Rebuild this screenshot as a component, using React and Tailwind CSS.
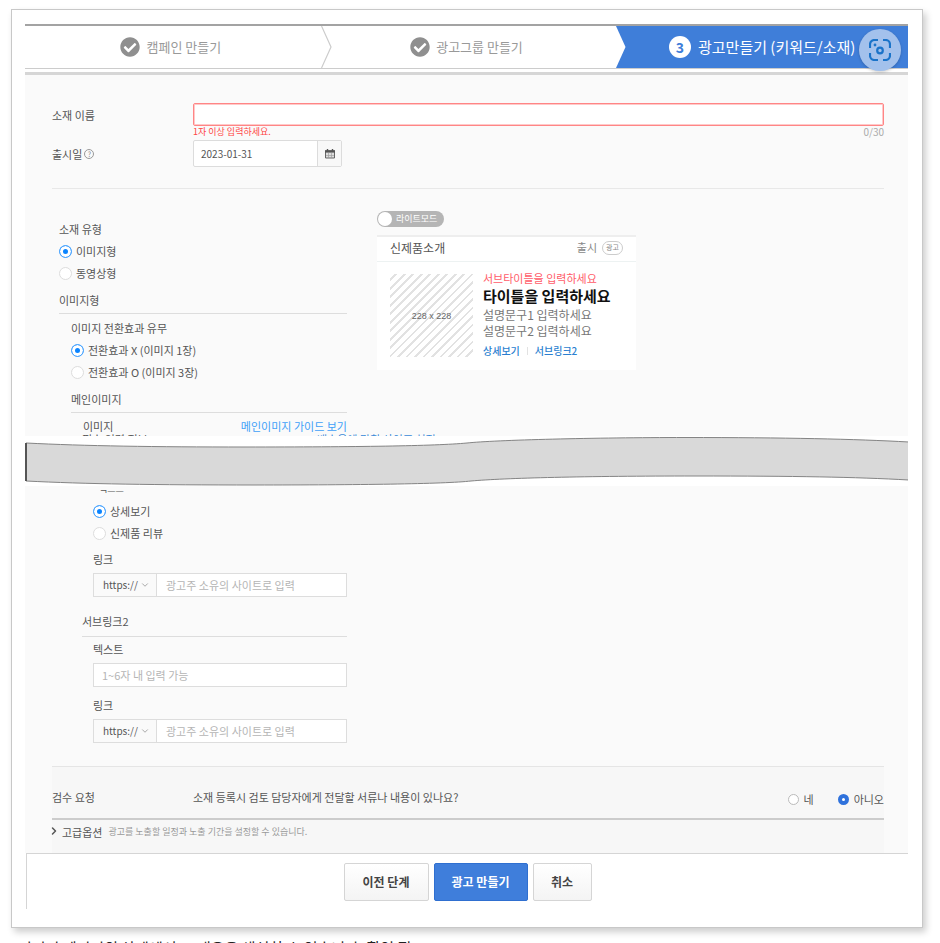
import { useState } from 'react'
import { ChevronDown, ChevronRight } from 'lucide-react'
import { FaCheckCircle } from 'react-icons/fa'

function CalendarIcon() {
  return (
    <svg viewBox="0 0 10 10" className="size-[10px]" aria-hidden="true">
      <path d="M0.5 2h9v7h-9z" fill="#ddd" stroke="#666" strokeWidth="1" />
      <path d="M0 1.2h10v2.4H0z" fill="#555" />
      <path d="M2.5 0v2M7.5 0v2" stroke="#555" strokeWidth="1.4" />
      <path d="M3.5 4v5M6.5 4v5M1 6.5h8" stroke="#999" strokeWidth="0.6" />
    </svg>
  )
}

function LensIcon() {
  return (
    <svg viewBox="0 0 22 22" className="size-[22px]" fill="none" stroke="#1a73c9" strokeWidth="2.2" aria-hidden="true">
      <path d="M1 9V5.5A4.5 4.5 0 0 1 5.5 1H9" />
      <path d="M14 1h2.5A4.5 4.5 0 0 1 21 5.5V9" />
      <path d="M1 14v2.5A4.5 4.5 0 0 0 5.5 21H9" />
      <path d="M14 21h2.5a4.5 4.5 0 0 0 4.5-4.5V14" />
      <circle cx="11" cy="11.5" r="2.8" />
      <circle cx="6" cy="6" r="1.4" fill="#1a73c9" stroke="none" />
    </svg>
  )
}

function DoneStep({ title, arrow }) {
  return (
    <li className="relative flex flex-1 items-center justify-center gap-1.5 bg-white pr-1 text-[13px] text-[#999]">
      {arrow && (
        <svg viewBox="0 0 11 42" className="absolute left-0 top-0 h-full w-[11px]" fill="none" aria-hidden="true">
          <path d="M0.5 0L10 21L0.5 42" stroke="#ccc" strokeWidth="1.2" />
        </svg>
      )}
      <FaCheckCircle className="size-5 text-[#8f8f8f]" />
      <span>{title}</span>
    </li>
  )
}

function Stepper() {
  return (
    <div className="relative border-t-2 border-[#a3a3a3]">
      <ol className="flex h-[42px] leading-[14px]">
        <DoneStep title="캠페인 만들기" />
        <DoneStep title="광고그룹 만들기" arrow />
        <li className="relative flex flex-1 items-center justify-center gap-[7px] bg-[#3f7ed9] text-[15px] text-white">
          <svg viewBox="0 0 10 42" className="absolute left-0 top-0 h-full w-[10px]" aria-hidden="true">
            <path d="M0 0L9.5 21L0 42z" fill="#fff" />
          </svg>
          <span className="flex size-[22px] items-center justify-center rounded-full bg-white text-sm font-bold text-[#3f7ed9]">3</span>
          <span>광고만들기 (키워드/소재)</span>
        </li>
      </ol>
      <button type="button" aria-label="이미지 검색" className="absolute right-[7px] top-[3px] flex size-[42px] items-center justify-center rounded-full bg-[#a3c1ec] shadow-[0_1px_3px_rgba(0,0,0,0.2)]">
        <LensIcon />
      </button>
      <div className="h-[7px] border-b-[3px] border-t border-b-[#d6d6d6] border-t-[#ccc] bg-white" />
    </div>
  )
}

function Radio({ name, label, defaultChecked }) {
  return (
    <label className="flex h-[22px] items-center gap-1">
      <input
        type="radio"
        name={name}
        defaultChecked={defaultChecked}
        className="size-[13px] appearance-none rounded-full border border-[#ddd] bg-white checked:border-[#4aa5ff] checked:bg-[#0a84ff] checked:shadow-[inset_0_0_0_3px_#fff]"
      />
      <span>{label}</span>
    </label>
  )
}

function LinkField({ id }) {
  return (
    <>
      <label htmlFor={id} className="flex h-[22px] items-center">링크</label>
      <div className="mt-[3px] flex h-6 border border-[#ddd] bg-white">
        <div className="relative w-[63px] border-r border-[#ddd] bg-[#fafafa]">
          <select aria-label="프로토콜" className="h-full w-full appearance-none pl-[9px] text-[10px]">
            <option>https://</option>
          </select>
          <ChevronDown className="pointer-events-none absolute right-[6px] top-[6px] size-[10px] text-[#999]" />
        </div>
        <input id={id} type="text" placeholder="광고주 소유의 사이트로 입력" className="min-w-0 flex-1 px-[9px] outline-none placeholder:text-[#b5b5b5]" />
      </div>
    </>
  )
}

function Preview() {
  return (
    <div className="w-[259px]">
      <button type="button" role="switch" aria-checked="false" className="flex h-4 w-[67px] items-center gap-1 rounded-full bg-[#b5b5b5] px-px text-[9px] text-white">
        <span className="size-[14px] rounded-full bg-white" />
        라이트모드
      </button>
      <div className="mt-2 border-t-2 border-[#eee] bg-white">
        <div className="flex h-[25px] items-center justify-between border-b border-[#edf2f2] px-[13px] pb-[3px] text-xs text-[#555]">
          <span>신제품소개</span>
          <span className="flex items-center gap-[5px] text-[11px] text-[#888]">
            출시
            <span className="flex h-[14px] items-center rounded-full border border-[#ccc] px-[3px] text-[7px]">광고</span>
          </span>
        </div>
        <div className="flex items-center gap-[10px] px-[13px] pb-[11px] pt-[10px]">
          <div className="flex size-[83px] items-center justify-center bg-[repeating-linear-gradient(-45deg,#fff_0px,#fff_4px,#e2e2e2_4px,#e2e2e2_6px)]">
            <span className="font-['Liberation_Sans'] text-[9px] text-[#666]">228 x 228</span>
          </div>
          <div className="flex flex-col">
            <p className="text-[11px] leading-[13px] text-[#ff5c69]">서브타이틀을 입력하세요</p>
            <p className="text-[15px] font-bold leading-[22px] text-[#111]">타이틀을 입력하세요</p>
            <p className="text-xs text-[#777]">설명문구1 입력하세요</p>
            <p className="text-xs text-[#777]">설명문구2 입력하세요</p>
            <div className="mt-1 flex items-center gap-[7px] text-[10px] font-medium leading-4 text-[#2b7fd0]">
              <a href="#detail">상세보기</a>
              <span className="h-2 w-px bg-[#e2e2e2]" />
              <a href="#sub2">서브링크2</a>
            </div>
          </div>
        </div>
      </div>
    </div>
  )
}

// torn-page strip between the two halves of the form
function PageBreak() {
  return (
    <svg viewBox="0 0 883 50" preserveAspectRatio="none" className="block h-[50px] w-full" aria-hidden="true">
      <rect width="883" height="50" fill="#fff" />
      <path
        d="M1 7C60 10 130 11 220 11C330 11 410 10 442 7C470 4 570 1.5 660 1.5C760 1.5 830 3 884 6V44C830 41 770 40 670 40C560 40 480 42 446 45C420 48 330 49 230 49C130 49 60 48 1 45z"
        fill="#d9d9d9"
        stroke="#848484"
      />
      <path d="M1 7V45" stroke="#555" strokeWidth="2" />
    </svg>
  )
}

export default function App() {
  const [name, setName] = useState('')

  return (
    <div className="overflow-hidden bg-white font-['Noto_Sans_CJK_KR',sans-serif] text-[11px] leading-4 text-[#555]">
      <main className="ml-[11px] mr-[17px] mt-[9px] border border-[#c8c8c8] pb-[18px] pl-[13px] pr-[14px] pt-[14px] shadow-[3px_4px_7px_rgba(0,0,0,0.2)]">
        <Stepper />

        <section className="bg-[#fafafa] pt-7">
          <div className="ml-[27px] mr-6 border-b border-[#e8e8e8] pb-[21px]">
            <div className="flex">
              <label htmlFor="name" className="w-[141px] pt-1">소재 이름</label>
              <div className="flex-1">
                <input id="name" value={name} onChange={(e) => setName(e.target.value)} maxLength={30} className="block h-[23px] w-full rounded-xs border border-[#ff8585] bg-white px-2 shadow-[inset_0_0_0_1px_#ffc9c9] outline-none" />
                <div className="flex h-3 justify-between leading-3">
                  <span className="text-[9px] text-[#ff4545]">1자 이상 입력하세요.</span>
                  <span className="text-[10px] text-[#aaa]">{name.length}/30</span>
                </div>
              </div>
            </div>
            <div className="mt-0.5 flex items-center">
              <div className="flex w-[141px] items-center gap-0.5">
                <label htmlFor="date">출시일</label>
                <span className="flex size-[10px] items-center justify-center rounded-full border border-[#999] text-[7px] text-[#888]">?</span>
              </div>
              <div className="flex h-[27px] w-[149px] rounded-xs border border-[#dcdcdc] bg-white">
                <input id="date" defaultValue="2023-01-31" className="min-w-0 flex-1 px-[7px] text-[10px] outline-none" />
                <button type="button" aria-label="날짜 선택" className="flex w-6 items-center justify-center border-l border-[#dcdcdc] bg-[#f8f8f8]">
                  <CalendarIcon />
                </button>
              </div>
            </div>
          </div>

          <div className="flex gap-[30px] pl-[34px]">
            <div className="w-[288px] pt-[29px]">
              <h3 className="flex h-[22px] items-center">소재 유형</h3>
              <Radio name="type" label="이미지형" defaultChecked />
              <Radio name="type" label="동영상형" />
              <h3 className="mt-[5px] h-[25px] border-b border-[#ddd] pt-[3px]">이미지형</h3>
              <div className="pl-3 pt-[3px]">
                <h4 className="flex h-[22px] items-center">이미지 전환효과 유무</h4>
                <Radio name="effect" label="전환효과 X (이미지 1장)" defaultChecked />
                <Radio name="effect" label="전환효과 O (이미지 3장)" />
                <h4 className="mt-[5px] h-[25px] border-b border-[#ddd] pt-[3px]">메인이미지</h4>
                <div className="flex justify-between pl-3 pt-[5px]">
                  <span>이미지</span>
                  <a href="#guide" className="text-[#40a0f8]">메인이미지 가이드 보기</a>
                </div>
              </div>
            </div>
            <div className="pt-[22px]">
              <Preview />
            </div>
          </div>
          <div className="flex h-0.5 overflow-hidden pl-[57px] leading-[11px]">
            <span className="w-[235px]">필수 입력 정보</span>
            <span className="text-[#3b8ad8]">배수율에 맞춰 사이즈 설정</span>
          </div>
        </section>

        <PageBreak />

        <section className="bg-[#fafafa]">
          <div className="w-[322px] pl-[57px] pt-1">
            <div className="flex h-1 items-end overflow-hidden pl-[17px] text-[9px] leading-[10px]">
              <span>텍스트</span>
            </div>
            <div className="pl-[11px] pt-[6px]">
              <Radio name="sub1" label="상세보기" defaultChecked />
              <Radio name="sub1" label="신제품 리뷰" />
              <div className="pt-1">
                <LinkField id="link1" />
              </div>
            </div>
            <h3 className="mt-[13px] h-[27px] border-b border-[#ddd] pt-[3px]">서브링크2</h3>
            <div className="pl-[11px] pt-px">
              <label htmlFor="sub2text" className="flex h-[22px] items-center">텍스트</label>
              <input id="sub2text" placeholder="1~6자 내 입력 가능" className="mt-[3px] block h-6 w-full border border-[#ddd] bg-white px-2 outline-none placeholder:text-[#b5b5b5]" />
              <div className="pt-[7px]">
                <LinkField id="link2" />
              </div>
            </div>
          </div>

          <div className="ml-[27px] mr-6 mt-[23px] border-t border-[#e5e5e5] bg-[#f7f7f7]">
            <div className="flex h-[53px] items-start border-b-2 border-[#ccc] pt-[22px]">
              <span className="w-[141px]">검수 요청</span>
              <span className="flex-1">소재 등록시 검토 담당자에게 전달할 서류나 내용이 있나요?</span>
              <div className="flex gap-6 pt-[2px]">
                <label className="flex items-center gap-[5px]">
                  <input type="radio" name="review" className="size-[11px] appearance-none rounded-full border border-[#bbb] bg-white checked:border-4 checked:border-[#2f72dc]" />
                  네
                </label>
                <label className="flex items-center gap-[5px]">
                  <input type="radio" name="review" defaultChecked className="size-[11px] appearance-none rounded-full border border-[#bbb] bg-white checked:border-4 checked:border-[#2f72dc]" />
                  아니오
                </label>
              </div>
            </div>
            <button type="button" className="flex h-[33px] w-full items-start pt-1 text-left">
              <ChevronRight className="-ml-1 mt-px size-3 text-[#555]" strokeWidth={3} />
              <span className="ml-0.5">고급옵션</span>
              <span className="ml-[6px] text-[9px] text-[#999]">광고를 노출할 일정과 노출 기간을 설정할 수 있습니다.</span>
            </button>
          </div>
        </section>

        <footer className="ml-px flex justify-center gap-[5px] border-l border-t border-[#d5d5d5] bg-white pb-2 pt-[9px] text-xs font-bold">
          <button type="button" className="h-[38px] w-[85px] rounded-xs border border-[#d5d5d5] bg-linear-to-b from-white to-[#f4f4f4] text-[#444]">이전 단계</button>
          <button type="button" className="h-[38px] w-[94px] rounded-xs border border-[#2f6fd0] bg-[#3f7edb] text-white">광고 만들기</button>
          <button type="button" className="h-[38px] w-[59px] rounded-xs border border-[#d5d5d5] bg-linear-to-b from-white to-[#f4f4f4] text-[#444]">취소</button>
        </footer>
      </main>
      <p className="mt-[11px] h-1 overflow-hidden pl-[18px] text-[15px] leading-[18px] text-[#222]">이미지 페이지의 상세에서 그 내용을 생성할 수 있습니다. 확인 필</p>
    </div>
  )
}
